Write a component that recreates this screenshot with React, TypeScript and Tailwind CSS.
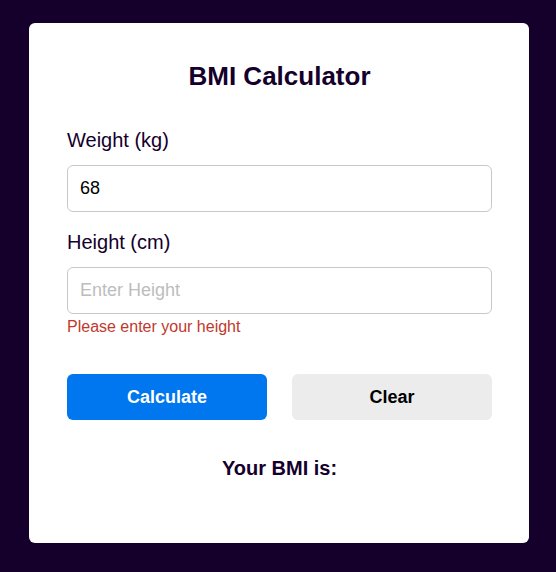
import { useState } from 'react';

export default function App() {
    const [weight, setWeight] = useState('68');
    const [height, setHeight] = useState('');

    return (
        <div className="min-h-[572px] bg-[#14002b] pt-[23px] pl-[29px] font-['Liberation_Sans',Arial,sans-serif]">
            <div className="w-[500px] h-[520px] bg-white rounded-[6px] pt-[38px] pl-[38px] pr-[37px] flex flex-col">
                <h1 className="text-center text-[26px] leading-[30px] font-bold text-[#14002b]">BMI Calculator</h1>

                <label className="mt-[38px] text-[20px] leading-[23px] text-[#14002b]">Weight (kg)</label>
                <input
                    value={weight}
                    onChange={(e) => setWeight(e.target.value)}
                    placeholder="Enter Weight"
                    className="mt-[13px] h-[47px] w-full rounded-[6px] border border-[#c9c9c9] px-[12px] text-[18px] text-black outline-none placeholder:text-[#bdbdbd]"
                />

                <label className="mt-[19px] text-[20px] leading-[23px] text-[#14002b]">Height (cm)</label>
                <input
                    value={height}
                    onChange={(e) => setHeight(e.target.value)}
                    placeholder="Enter Height"
                    className="mt-[13px] h-[47px] w-full rounded-[6px] border border-[#c9c9c9] px-[12px] text-[18px] text-black outline-none placeholder:text-[#bdbdbd]"
                />
                <p className="mt-[4px] text-[16px] leading-[18px] text-[#c0392b]">Please enter your height</p>

                <div className="mt-[38px] flex gap-[25px]">
                    <button className="h-[46px] w-[200px] rounded-[6px] bg-[#0077ee] text-[18px] font-bold text-white">
                        Calculate
                    </button>
                    <button className="h-[46px] w-[200px] rounded-[6px] bg-[#ececec] text-[18px] font-bold text-black">
                        Clear
                    </button>
                </div>

                <h2 className="mt-[37px] text-center text-[20px] leading-[23px] font-bold text-[#14002b]">Your BMI is:</h2>
            </div>
        </div>
    );
}
